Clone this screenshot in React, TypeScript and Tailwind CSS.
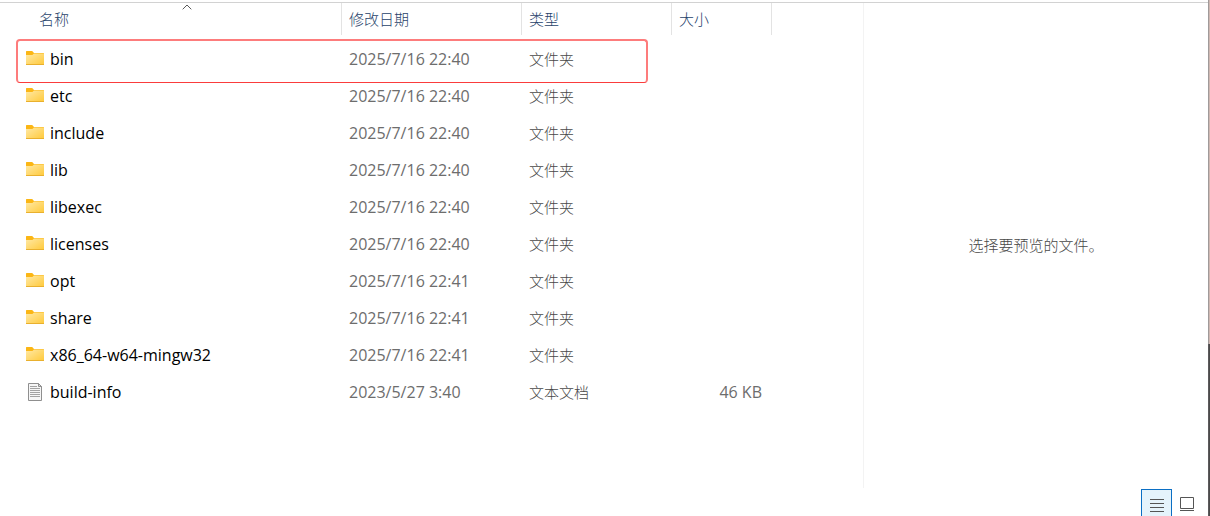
import { useState } from "react";

type Entry = {
  name: string;
  modified: string;
  kind: "folder" | "text";
  size?: string;
};

const entries: Entry[] = [
  { name: "bin", modified: "2025/7/16 22:40", kind: "folder" },
  { name: "etc", modified: "2025/7/16 22:40", kind: "folder" },
  { name: "include", modified: "2025/7/16 22:40", kind: "folder" },
  { name: "lib", modified: "2025/7/16 22:40", kind: "folder" },
  { name: "libexec", modified: "2025/7/16 22:40", kind: "folder" },
  { name: "licenses", modified: "2025/7/16 22:40", kind: "folder" },
  { name: "opt", modified: "2025/7/16 22:41", kind: "folder" },
  { name: "share", modified: "2025/7/16 22:41", kind: "folder" },
  { name: "x86_64-w64-mingw32", modified: "2025/7/16 22:41", kind: "folder" },
  { name: "build-info", modified: "2023/5/27 3:40", kind: "text", size: "46 KB" },
];

const kindLabels = { folder: "文件夹", text: "文本文档" };

function FolderIcon() {
  return (
    <svg width="18" height="18" viewBox="0 0 18 18" className="shrink-0" aria-hidden="true">
      <defs>
        <linearGradient id="folder-front" x1="0" y1="0" x2="1" y2="1">
          <stop offset="0" stopColor="#ffe9a6" />
          <stop offset="1" stopColor="#ffc939" />
        </linearGradient>
      </defs>
      <path d="M0 1.6Q0 1 .6 1H6.2L8 3H17.4Q18 3 18 3.6V8H0z" fill="#fbb615" />
      <path d="M0 5H6.4L8 3.5H18V14.4Q18 15 17.4 15H.6Q0 15 0 14.4z" fill="url(#folder-front)" />
      <path d="M0 14H18V14.4Q18 15 17.4 15H.6Q0 15 0 14.4z" fill="#e9b02e" />
    </svg>
  );
}

function TextFileIcon() {
  return (
    <svg width="18" height="18" viewBox="0 0 18 18" className="shrink-0" aria-hidden="true">
      <path d="M2.5 .5H12.5L15.5 3.5V17.5H2.5z" fill="#f6f6f6" stroke="#8f8f8f" />
      <path d="M12.5 .5V3.5H15.5z" fill="#dcdcdc" stroke="#8f8f8f" />
      <path d="M4 3.5H11M4 5.5H14M4 7.5H14M4 9.5H14M4 11.5H14M4 13.5H14" stroke="#a3a3a3" />
    </svg>
  );
}

export default function App() {
  const [view, setView] = useState<"details" | "thumbnails">("details");

  return (
    <div className="flex min-h-screen bg-white font-['Open_Sans','Noto_Sans_CJK_SC',sans-serif] text-[#6d6d6d]">
      <div className="flex min-w-0 flex-1 flex-col pt-0.5">
        <div className="flex flex-1 border-t border-[#d2d2d2]">
          {/* File list */}
          <main className="relative min-w-0 flex-1">
            <table className="w-full table-fixed border-separate border-spacing-0 text-left">
              <colgroup>
                <col className="w-[342px]" />
                <col className="w-[180px]" />
                <col className="w-[150px]" />
                <col className="w-[100px]" />
                <col />
              </colgroup>
              <thead className="text-[15px] leading-8 text-[#27426a]">
                <tr>
                  <th aria-sort="ascending" className="relative border-r border-[#e3e3e3] p-0 pl-[39px] font-light">
                    <button type="button">名称</button>
                    <svg width="10" height="6" viewBox="0 0 10 6" className="absolute top-px left-[182px]" aria-hidden="true">
                      <path d="M.7 5.3L5 1L9.3 5.3" fill="none" stroke="#5a5a5a" />
                    </svg>
                  </th>
                  <th className="border-r border-[#e3e3e3] p-0 pl-[7px] font-light">
                    <button type="button">修改日期</button>
                  </th>
                  <th className="border-r border-[#e3e3e3] p-0 pl-[7px] font-light">
                    <button type="button">类型</button>
                  </th>
                  <th className="border-r border-[#e3e3e3] p-0 pl-[7px] font-light">
                    <button type="button">大小</button>
                  </th>
                  <td />
                </tr>
              </thead>
              <tbody className="text-base leading-6 before:block before:h-[5px]">
                {entries.map((entry) => (
                  <tr key={entry.name} className="h-[37px]">
                    <td className="p-0 pl-[26px] text-black">
                      <div className="flex items-center gap-1.5">
                        {entry.kind === "folder" ? <FolderIcon /> : <TextFileIcon />}
                        <span>{entry.name}</span>
                      </div>
                    </td>
                    <td className="p-0 pl-[7px]">{entry.modified}</td>
                    <td className="p-0 pl-[7px] text-[15px] font-light text-[#484848]">{kindLabels[entry.kind]}</td>
                    <td className="p-0 pr-[10px] text-right">{entry.size}</td>
                    <td />
                  </tr>
                ))}
              </tbody>
            </table>
            {/* Marker around the first row */}
            <div className="pointer-events-none absolute top-9 left-4 h-11 w-[632px] rounded border-2 border-b border-[#fd7c7c] border-b-[#fa3c3c]" />
          </main>

          {/* Preview pane */}
          <aside className="flex w-[345px] items-center justify-center border-l border-[#f3f3f3]">
            <p className="text-[15px] font-light text-[#484848]">选择要预览的文件。</p>
          </aside>
        </div>

        {/* View switcher */}
        <footer className="flex justify-end pt-px pr-1.5 text-[#555555]">
          <button
            type="button"
            aria-label="详细信息"
            aria-pressed={view === "details"}
            onClick={() => setView("details")}
            className="flex h-[27px] w-[31px] items-end justify-center border border-b-0 border-transparent pb-1 pl-0.5 aria-pressed:border-[#0b6fc4] aria-pressed:bg-[#e5f3fb]"
          >
            <svg width="15" height="13" viewBox="0 0 15 13" aria-hidden="true">
              <path d="M0 .5H14M0 4.5H14M0 8.5H14M0 12.5H14" stroke="currentColor" />
            </svg>
          </button>
          <button
            type="button"
            aria-label="大图标"
            aria-pressed={view === "thumbnails"}
            onClick={() => setView("thumbnails")}
            className="flex h-[27px] w-[30px] items-end justify-center border border-b-0 border-transparent pb-[5px] aria-pressed:border-[#0b6fc4] aria-pressed:bg-[#e5f3fb]"
          >
            <svg width="14" height="14" viewBox="0 0 14 14" aria-hidden="true">
              <path d="M.5 .5H13.5V11.5H.5zM0 13.5H14" fill="none" stroke="currentColor" />
            </svg>
          </button>
        </footer>
      </div>

      {/* Window edge with the desktop behind it */}
      <div className="flex w-0.5 flex-col">
        <div className="flex-2 border-l border-[#a09a9a] bg-[#d0b8b2]" />
        <div className="flex-1 border-l border-[#5c5a5c] bg-[#4b4a4a]" />
      </div>
    </div>
  );
}
